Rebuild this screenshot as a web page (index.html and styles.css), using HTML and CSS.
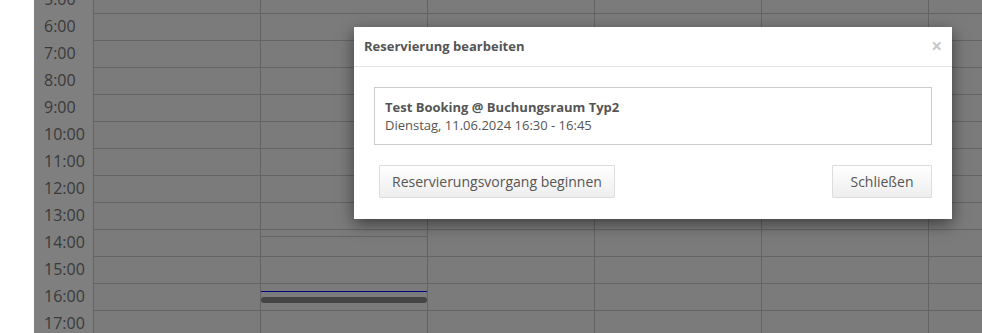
FILE: index.html
```html
<!DOCTYPE html>
<html lang="de">
<head>
    <meta charset="UTF-8">
    <meta name="viewport" content="width=device-width, initial-scale=1.0">
    <title>Reservierung bearbeiten</title>
    <link rel="stylesheet" href="styles.css">
</head>
<body>
    <div class="calendar-wrap">
        <div class="calendar">
            <div class="row"><div class="time">5:00</div><div class="cell"></div><div class="cell"></div><div class="cell"></div><div class="cell"></div><div class="cell"></div><div class="cell"></div></div>
            <div class="row"><div class="time">6:00</div><div class="cell"></div><div class="cell"></div><div class="cell"></div><div class="cell"></div><div class="cell"></div><div class="cell"></div></div>
            <div class="row"><div class="time">7:00</div><div class="cell"></div><div class="cell"></div><div class="cell"></div><div class="cell"></div><div class="cell"></div><div class="cell"></div></div>
            <div class="row"><div class="time">8:00</div><div class="cell"></div><div class="cell"></div><div class="cell"></div><div class="cell"></div><div class="cell"></div><div class="cell"></div></div>
            <div class="row"><div class="time">9:00</div><div class="cell"></div><div class="cell"></div><div class="cell"></div><div class="cell"></div><div class="cell"></div><div class="cell"></div></div>
            <div class="row"><div class="time">10:00</div><div class="cell"></div><div class="cell"></div><div class="cell"></div><div class="cell"></div><div class="cell"></div><div class="cell"></div></div>
            <div class="row"><div class="time">11:00</div><div class="cell"></div><div class="cell"></div><div class="cell"></div><div class="cell"></div><div class="cell"></div><div class="cell"></div></div>
            <div class="row"><div class="time">12:00</div><div class="cell"></div><div class="cell"></div><div class="cell"></div><div class="cell"></div><div class="cell"></div><div class="cell"></div></div>
            <div class="row"><div class="time">13:00</div><div class="cell"></div><div class="cell"></div><div class="cell"></div><div class="cell"></div><div class="cell"></div><div class="cell"></div></div>
            <div class="row"><div class="time">14:00</div><div class="cell"></div><div class="cell"><div class="slot-top"></div></div><div class="cell"></div><div class="cell"></div><div class="cell"></div><div class="cell"></div></div>
            <div class="row"><div class="time">15:00</div><div class="cell"></div><div class="cell"></div><div class="cell"></div><div class="cell"></div><div class="cell"></div><div class="cell"></div></div>
            <div class="row"><div class="time">16:00</div><div class="cell"></div><div class="cell"><div class="now-line"></div><div class="event-bar"></div></div><div class="cell"></div><div class="cell"></div><div class="cell"></div><div class="cell"></div></div>
            <div class="row"><div class="time">17:00</div><div class="cell"></div><div class="cell"></div><div class="cell"></div><div class="cell"></div><div class="cell"></div><div class="cell"></div></div>
        </div>

        <div class="backdrop"></div>

        <div class="modal">
            <div class="modal-header">
                <h4>Reservierung bearbeiten</h4>
                <span class="close">&times;</span>
            </div>
            <div class="modal-body">
                <div class="booking">
                    <div class="booking-title">Test Booking @ Buchungsraum Typ2</div>
                    <div class="booking-date">Dienstag, 11.06.2024 16:30 - 16:45</div>
                </div>
            </div>
            <div class="modal-footer">
                <button type="button" class="btn">Reservierungsvorgang beginnen</button>
                <button type="button" class="btn btn-close">Schließen</button>
            </div>
        </div>
    </div>
</body>
</html>
```

FILE: styles.css
```css
body, html {
    margin: 0;
    height: 100%;
    overflow: hidden;
    background: #ffffff;
    font-family: 'Open Sans', 'Liberation Sans', sans-serif;
}
.calendar-wrap {
    position: relative;
    margin-left: 34px;
    height: 333px;
    overflow: hidden;
}
.calendar {
    margin-top: -13px;
}
.row {
    display: flex;
    height: 27px;
}
.time {
    width: 59px;
    flex-shrink: 0;
    padding-left: 10px;
    box-sizing: border-box;
    background: #ffffff;
    color: #757575;
    font-size: 16px;
    line-height: 25px;
}
.cell {
    width: 167px;
    flex-shrink: 0;
    box-sizing: border-box;
    border-left: 1px solid #c8c8c8;
    border-bottom: 1px solid #c8c8c8;
    background: #f6f6f6;
}
.slot-top {
    height: 6px;
    border-bottom: 1px solid #c8c8c8;
}
.now-line {
    margin-top: 7px;
    height: 1px;
    background: #0000ff;
}
.event-bar {
    margin-top: 5px;
    height: 6px;
    border-radius: 3px;
    background: #888888;
}
.backdrop {
    position: absolute;
    top: 0;
    left: 0;
    right: 0;
    bottom: 0;
    background: rgba(0, 0, 0, 0.5);
}
.modal {
    position: absolute;
    top: 27px;
    left: 320px;
    width: 598px;
    background: #ffffff;
    box-shadow: 0 5px 15px rgba(0, 0, 0, 0.5);
    color: #555555;
}
.modal-header {
    display: flex;
    justify-content: space-between;
    align-items: center;
    padding: 10px 10px;
    border-bottom: 1px solid #e5e5e5;
}
.modal-header h4 {
    margin: 0;
    font-size: 13px;
    font-weight: bold;
    line-height: 19px;
    color: #555555;
}
.close {
    color: #c8c8c8;
    font-size: 19px;
    font-weight: bold;
    line-height: 19px;
    margin-right: 0;
}
.modal-body {
    padding: 20px 20px 0;
}
.booking {
    border: 1px solid #cccccc;
    padding: 10px 10px;
    font-size: 13px;
    line-height: 18px;
}
.booking-title {
    font-weight: bold;
}
.modal-footer {
    display: flex;
    justify-content: space-between;
    padding: 20px 20px 21px 25px;
}
.btn {
    height: 33px;
    padding: 0 12px;
    border: 1px solid #dddddd;
    border-radius: 1px;
    background: linear-gradient(#ffffff, #eeeeee);
    color: #555555;
    font-family: 'Open Sans', 'Liberation Sans', sans-serif;
    font-size: 14px;
    cursor: pointer;
}
.btn-close {
    min-width: 100px;
}
```
